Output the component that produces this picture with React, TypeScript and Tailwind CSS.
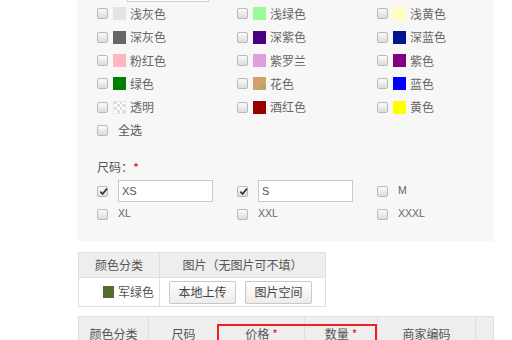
const FONT = "font-['Noto_Sans_CJK_SC','Noto_Sans',sans-serif]";

type Swatch = { label: string; color?: string; clear?: boolean; gradient?: boolean };

const COLORS: Swatch[][] = [
  [
    { label: "浅灰色", color: "#e4e4e4" },
    { label: "浅绿色", color: "#98fb98" },
    { label: "浅黄色", color: "#ffffc0" },
  ],
  [
    { label: "深灰色", color: "#666666" },
    { label: "深紫色", color: "#4b0082" },
    { label: "深蓝色", color: "#00168c" },
  ],
  [
    { label: "粉红色", color: "#ffb6c1" },
    { label: "紫罗兰", color: "#dda0dd" },
    { label: "紫色", color: "#800080" },
  ],
  [
    { label: "绿色", color: "#008000" },
    { label: "花色", gradient: true },
    { label: "蓝色", color: "#0000ff" },
  ],
  [
    { label: "透明", clear: true },
    { label: "酒红色", color: "#990000" },
    { label: "黄色", color: "#ffff00" },
  ],
];

function Checkbox({ checked = false }: { checked?: boolean }) {
  return (
    <span className="relative flex h-[11px] w-[11px] shrink-0 items-center justify-center rounded-[2px] border border-[#b9b9b9] bg-gradient-to-b from-[#fbfbfb] to-[#dcdcdc]">
      {checked ? (
        <svg viewBox="0 0 10 10" className="absolute left-[1px] top-[0px] h-[9px] w-[9px]">
          <path d="M1.5 5.2 L4 7.8 L8.8 1.8" fill="none" stroke="#333" strokeWidth="1.8" />
        </svg>
      ) : null}
    </span>
  );
}

function SwatchBox({ s }: { s: Swatch }) {
  if (s.clear) {
    return (
      <span className="grid h-[13px] w-[13px] shrink-0 grid-cols-4 grid-rows-4 border border-[#e6e6e6] bg-white">
        {Array.from({ length: 16 }).map((_, i) => (
          <span
            key={i}
            className={(Math.floor(i / 4) + i) % 2 === 0 ? "bg-[#dcdcdc]" : "bg-white"}
          />
        ))}
      </span>
    );
  }
  if (s.gradient) {
    return (
      <span className="block h-[13px] w-[13px] shrink-0 bg-gradient-to-br from-[#d99a66] via-[#d0a46c] to-[#b4a45e]" />
    );
  }
  return <span className="block h-[13px] w-[13px] shrink-0" style={{ backgroundColor: s.color }} />;
}

function ColorItem({ s }: { s: Swatch }) {
  return (
    <div className="flex items-center">
      <Checkbox />
      <span className="ml-[5px] block">
        <SwatchBox s={s} />
      </span>
      <span className="ml-[4px] text-[12px] leading-none text-[#666]">{s.label}</span>
    </div>
  );
}

function SizeItem({ label, checked, input }: { label: string; checked?: boolean; input?: boolean }) {
  return (
    <div className="flex items-center">
      <Checkbox checked={checked} />
      {input ? (
        <span className="ml-[10px] flex h-[22px] w-[95px] items-center border border-[#c9c9c9] bg-white px-[3px] font-['Liberation_Sans',sans-serif] text-[11px] text-[#555]">
          {label}
        </span>
      ) : (
        <span className="ml-[10px] font-['Liberation_Sans',sans-serif] text-[10.5px] text-[#666]">{label}</span>
      )}
    </div>
  );
}

function Button({ children }: { children: string }) {
  return (
    <span className="flex h-[23px] w-[67px] items-center justify-center rounded-[2px] border border-[#c8c8c8] bg-gradient-to-b from-white to-[#ececec] text-[12px] text-[#444]">
      {children}
    </span>
  );
}

export default function App() {
  return (
    <div className={`relative h-[340px] w-[512px] overflow-hidden bg-white ${FONT}`}>
      <section className="ml-[77px] flow-root h-[241px] w-[417px] bg-[#f7f7f7] pl-[20px]">
        <div className="ml-[30px] mt-[-20px] h-[22px] w-[82px] border border-[#cfcfcf] bg-white" />
        <div className="mt-[0.3px]">
          {COLORS.map((row, i) => (
            <div key={i} className="grid h-[23.3px] grid-cols-[140px_140px_140px] items-center">
              {row.map((s) => (
                <ColorItem key={s.label} s={s} />
              ))}
            </div>
          ))}
          <div className="flex h-[23.3px] items-center">
            <Checkbox />
            <span className="ml-[10px] text-[12px] text-[#555]">全选</span>
          </div>
        </div>

        <p className="mt-[17px] flex h-[16px] items-center text-[12px] text-[#555]">
          尺码：<span className="text-[13px] leading-none text-[#e02020]">*</span>
        </p>
        <div className="mt-[5px] grid h-[22px] grid-cols-[140px_140px_140px] items-center">
          <SizeItem label="XS" checked input />
          <SizeItem label="S" checked input />
          <SizeItem label="M" />
        </div>
        <div className="mt-[2px] grid h-[20px] grid-cols-[140px_140px_140px] items-center">
          <SizeItem label="XL" />
          <SizeItem label="XXL" />
          <SizeItem label="XXXL" />
        </div>
      </section>

      <table className="ml-[78px] mt-[11px] w-[248px] border-collapse text-[12px] text-[#555]">
        <tbody>
          <tr className="h-[25px] bg-[#eeeeee]">
            <td className="w-[81px] border border-[#e0e0e0] p-0 text-center font-normal">颜色分类</td>
            <td className="border border-[#e0e0e0] p-0 text-center">图片（无图片可不填）</td>
          </tr>
          <tr className="h-[29px] bg-white">
            <td className="border border-[#e0e0e0] p-0">
              <div className="ml-[24px] flex items-center">
                <span className="block h-[12px] w-[11px] bg-[#556b2f]" />
                <span className="ml-[4px]">军绿色</span>
              </div>
            </td>
            <td className="border border-[#e0e0e0] p-0">
              <div className="ml-[9px] flex gap-[9px]">
                <Button>本地上传</Button>
                <Button>图片空间</Button>
              </div>
            </td>
          </tr>
        </tbody>
      </table>

      <div className="relative ml-[78px] mt-[9px] w-[416px]">
        <table className="w-[416px] border-collapse text-[12px] leading-[14px] text-[#555]">
          <tbody>
            <tr className="h-[34px] bg-[#eeeeee]">
              <td className="w-[70px] border border-[#e0e0e0] p-0 text-center">颜色分类</td>
              <td className="w-[70px] border border-[#e0e0e0] p-0 text-center">尺码</td>
              <td className="w-[86px] border border-[#e0e0e0] p-0 text-center">
                价格<span className="ml-[3px] text-[#e02020]">*</span>
              </td>
              <td className="w-[73px] border border-[#e0e0e0] p-0 text-center">
                数量<span className="ml-[3px] text-[#e02020]">*</span>
              </td>
              <td className="w-[98px] border border-[#e0e0e0] p-0 text-center">商家编码</td>
              <td className="border border-[#e0e0e0] p-0" />
            </tr>
          </tbody>
        </table>
        <div className="absolute left-[139px] top-[8px] h-[40px] w-[160px] border-2 border-[#ee2222]" />
      </div>
    </div>
  );
}
